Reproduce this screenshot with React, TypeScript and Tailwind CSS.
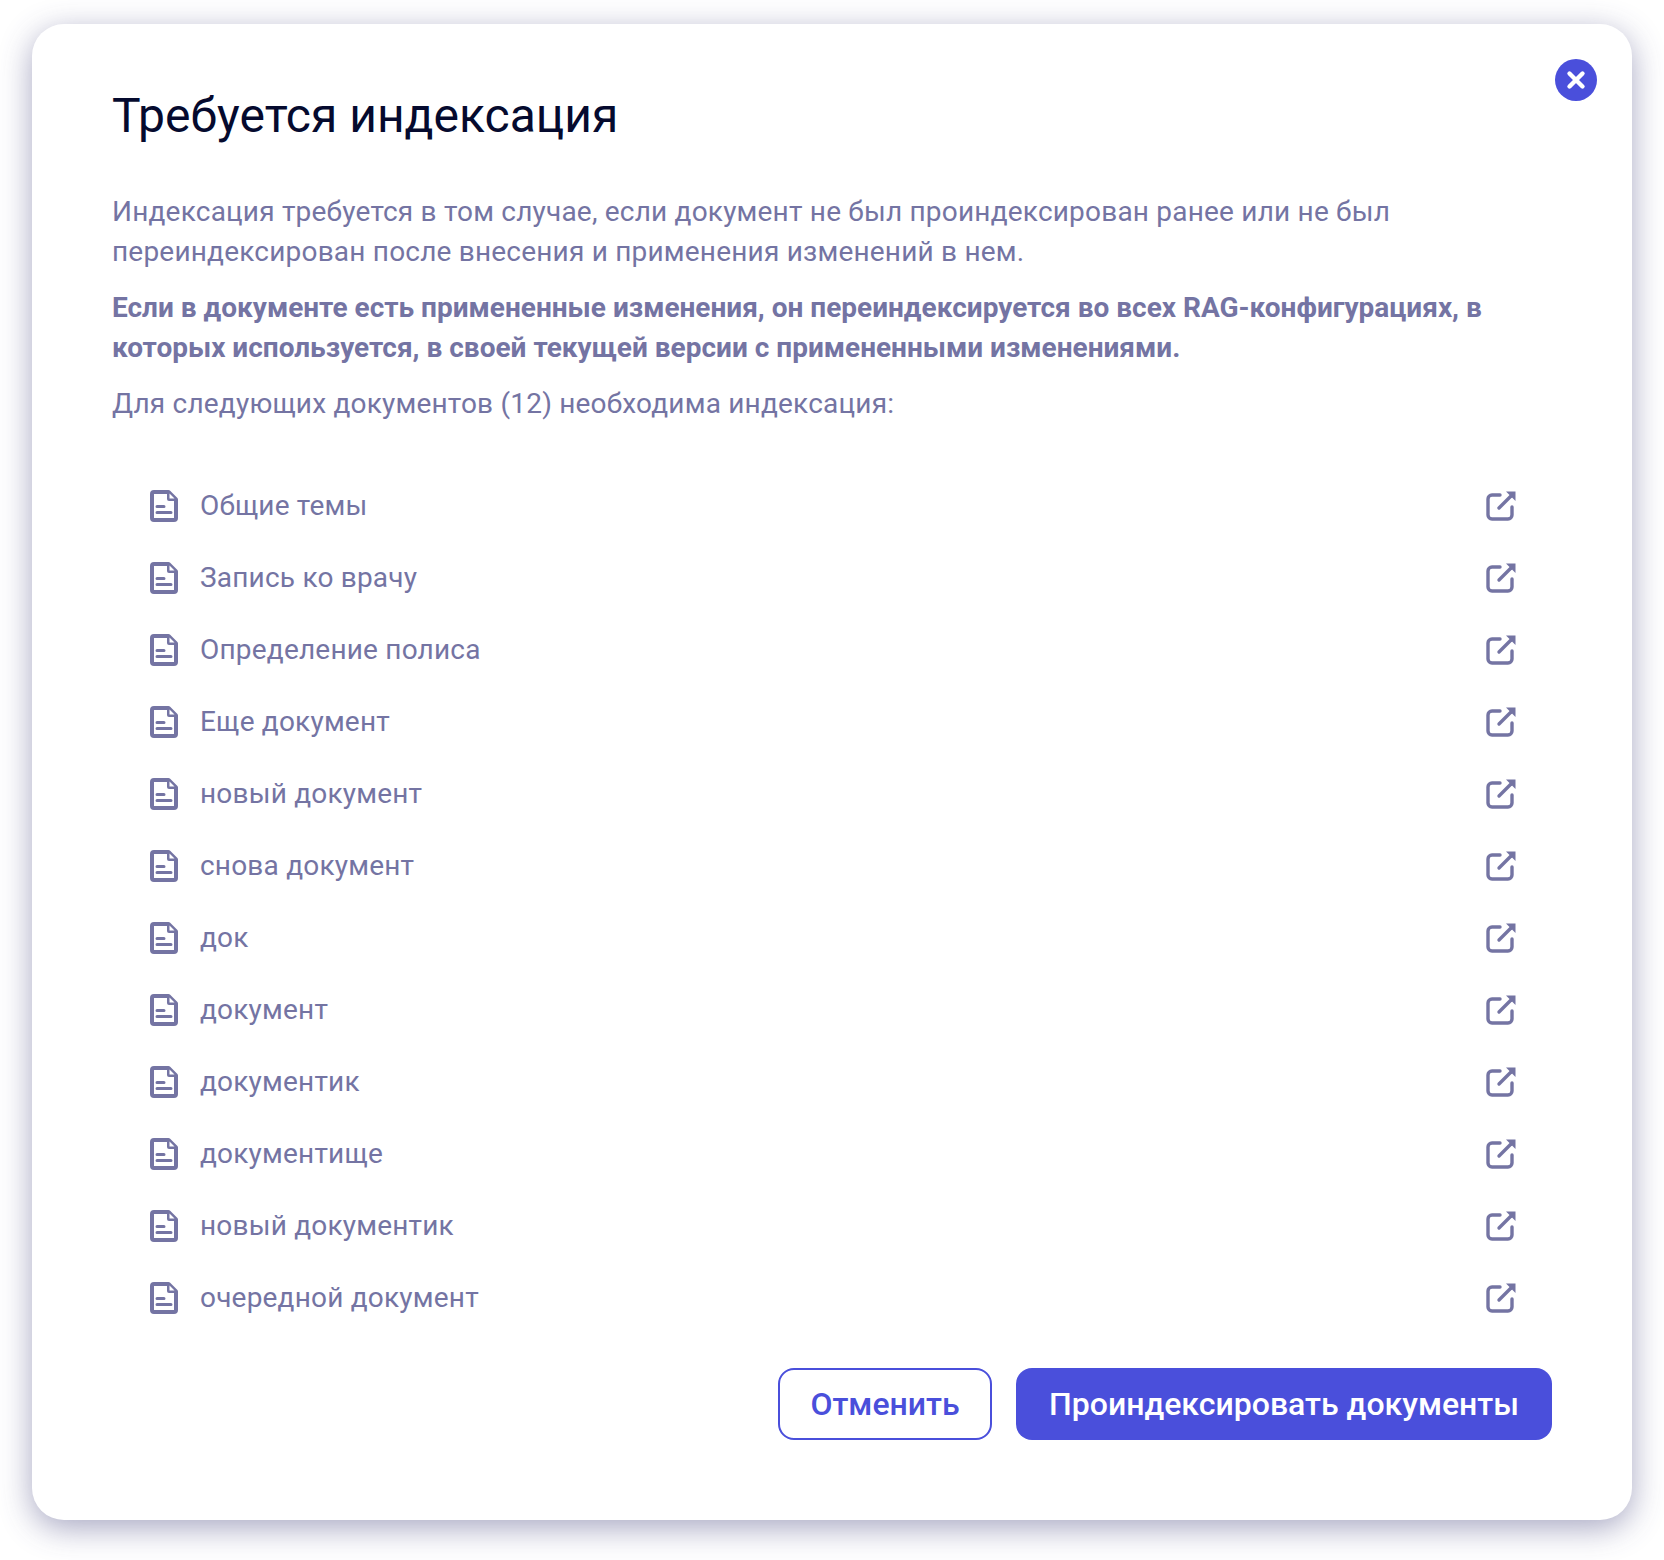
import { X } from "lucide-react";

const docs = [
  "Общие темы",
  "Запись ко врачу",
  "Определение полиса",
  "Еще документ",
  "новый документ",
  "снова документ",
  "док",
  "документ",
  "документик",
  "документище",
  "новый документик",
  "очередной документ",
];

function DocIcon() {
  return (
    <svg width="28" height="32" viewBox="0 0 28 32" fill="none" className="shrink-0">
      <path
        d="M4 2h14.5L26 9.5V28a2 2 0 0 1-2 2H4a2 2 0 0 1-2-2V4a2 2 0 0 1 2-2Z"
        stroke="#7474A3"
        strokeWidth="4"
        strokeLinejoin="round"
      />
      <path d="M17 1h2l8 8v2h-8a2 2 0 0 1-2-2V1Z" fill="#7474A3" />
      <path d="M19.5 3.5 24.5 8.5H19.5Z" fill="#fff" />
      <path d="M7 16.5h7M7 22.5h14" stroke="#7474A3" strokeWidth="3" strokeLinecap="round" />
    </svg>
  );
}

function OpenIcon() {
  return (
    <svg width="30" height="30" viewBox="0 0 30 30" fill="none" className="shrink-0">
      <path
        d="M14 4H6a4 4 0 0 0-4 4v16a4 4 0 0 0 4 4h16a4 4 0 0 0 4-4v-8"
        stroke="#7474A3"
        strokeWidth="3.4"
        strokeLinecap="round"
      />
      <path d="M13 17 25 5" stroke="#7474A3" strokeWidth="3.4" strokeLinecap="round" />
      <path d="M20 .5h9.5V10Z" fill="#7474A3" />
    </svg>
  );
}

export default function App() {
  return (
    <div className="w-[1664px] h-[1560px] bg-white pt-6 pl-8 font-['Roboto',sans-serif]">
      <div className="relative flex flex-col w-[1600px] h-[1496px] rounded-[32px] bg-white px-20 pt-[64px] shadow-[0_8px_32px_rgba(60,60,120,0.45)]">
        <button className="absolute top-[35px] right-[35px] flex items-center justify-center w-[42px] h-[42px] rounded-full bg-[#4a4fdb] text-white">
          <X size={26} strokeWidth={4} />
        </button>

        <h1 className="text-[48px] leading-[56px] font-normal text-[#050a2e]">
          Требуется индексация
        </h1>

        <div className="mt-[48px] text-[28px] leading-[40px] text-[#7474A3]">
          <p className="tracking-[0.2px]">
            Индексация требуется в том случае, если документ не был проиндексирован ранее или не был
            переиндексирован после внесения и применения изменений в нем.
          </p>
          <p className="mt-4 font-bold">
            Если в документе есть примененные изменения, он переиндексируется во всех RAG-конфигурациях, в
            которых используется, в своей текущей версии с примененными изменениями.
          </p>
          <p className="mt-4 tracking-[0.2px]">Для следующих документов (12) необходима индексация:</p>
        </div>

        <div className="mt-[46px] flex flex-col pl-[38px] pr-[36px]">
          {docs.map((name) => (
            <div key={name} className="flex items-center h-[72px]">
              <DocIcon />
              <span className="ml-[22px] text-[28px] leading-[40px] text-[#7474A3] tracking-[0.2px]">{name}</span>
              <div className="ml-auto">
                <OpenIcon />
              </div>
            </div>
          ))}
        </div>

        <div className="mt-auto mb-[80px] flex justify-end gap-6">
          <button className="h-[72px] w-[214px] rounded-[16px] border-2 border-[#4a4fdb] bg-white text-[32px] font-medium text-[#4a4fdb]">
            Отменить
          </button>
          <button className="h-[72px] w-[536px] rounded-[16px] bg-[#4a4fdb] text-[32px] font-medium text-white">
            Проиндексировать документы
          </button>
        </div>
      </div>
    </div>
  );
}
